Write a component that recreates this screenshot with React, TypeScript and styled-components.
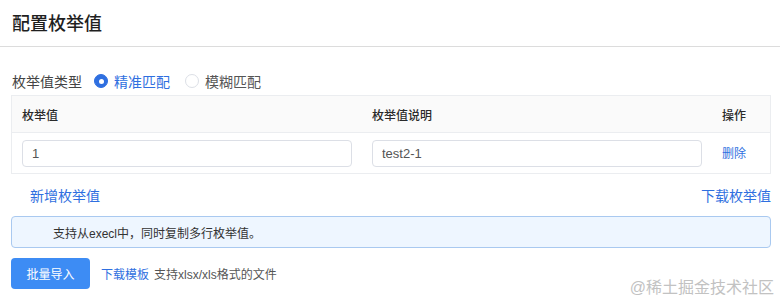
import React from "react";
import styled, { createGlobalStyle } from "styled-components";

const Global = createGlobalStyle`
  html, body { margin: 0; padding: 0; background: #fff; }
  body {
    font-family: "Liberation Sans", "Noto Sans CJK SC", sans-serif;
    color: #333;
    -webkit-font-smoothing: antialiased;
  }
  * { box-sizing: border-box; }
`;

const Page = styled.div`
  position: relative;
  width: 780px;
  height: 303px;
  overflow: hidden;
`;

const Header = styled.div`
  height: 47px;
  padding: 0 12px;
  display: flex;
  align-items: center;
  border-bottom: 1px solid #dcdcdc;
`;

const Title = styled.h1`
  margin: 0;
  font-size: 18px;
  font-weight: 500;
  color: #1f1f1f;
  padding-bottom: 2px;
`;

const Content = styled.div`
  padding: 0 9px 0 11px;
`;

const TypeRow = styled.div`
  margin-top: 20px;
  height: 28px;
  display: flex;
  align-items: center;
  font-size: 14px;
`;

const TypeLabel = styled.span`
  color: #444;
  margin-left: 1px;
  margin-right: 12px;
`;

const RadioItem = styled.label<{ $checked?: boolean }>`
  display: inline-flex;
  align-items: center;
  gap: 6px;
  margin-right: 15px;
  color: ${(p) => (p.$checked ? "#2f6fe0" : "#555")};
  cursor: pointer;
`;

const RadioDot = styled.span<{ $checked?: boolean }>`
  width: 14px;
  height: 14px;
  border-radius: 50%;
  border: 1px solid ${(p) => (p.$checked ? "#2f6fe0" : "#dcdfe6")};
  background: ${(p) => (p.$checked ? "#2f6fe0" : "#fff")};
  display: inline-flex;
  align-items: center;
  justify-content: center;
  &::after {
    content: "";
    width: 5px;
    height: 5px;
    border-radius: 50%;
    background: #fff;
    display: ${(p) => (p.$checked ? "block" : "none")};
  }
`;

const Table = styled.div`
  border: 1px solid #ebedf0;
`;

const Row = styled.div<{ $head?: boolean }>`
  display: grid;
  grid-template-columns: 350px 350px 1fr;
  align-items: center;
  height: ${(p) => (p.$head ? "37px" : "40px")};
  background: ${(p) => (p.$head ? "#fafafa" : "#fff")};
  border-bottom: ${(p) => (p.$head ? "1px solid #ebedf0" : "none")};
`;

const HeadCell = styled.div`
  padding: 0 10px;
  font-size: 12px;
  font-weight: 500;
  color: #2a2a2a;
`;

const Cell = styled.div`
  padding: 0 10px;
`;

const Input = styled.input`
  width: 330px;
  height: 27px;
  border: 1px solid #dcdfe6;
  border-radius: 4px;
  padding: 0 9px;
  font-family: "Liberation Sans", "Noto Sans CJK SC", sans-serif;
  font-size: 13px;
  color: #555;
  outline: none;
`;

const Link = styled.a<{ $size?: number }>`
  color: #2f6fe0;
  font-size: ${(p) => p.$size ?? 12}px;
  text-decoration: none;
  cursor: pointer;
`;

const LinksRow = styled.div`
  height: 42px;
  display: flex;
  align-items: center;
  justify-content: space-between;
  padding-left: 19px;
  padding-bottom: 1px;
`;

const Alert = styled.div`
  height: 32px;
  border: 1px solid #a9c9f0;
  background: #eef6ff;
  border-radius: 4px;
  display: flex;
  align-items: center;
  padding-left: 41px;
  font-size: 12px;
  color: #333;
`;

const ImportRow = styled.div`
  margin-top: 10px;
  display: flex;
  align-items: center;
  font-size: 12px;
`;

const PrimaryButton = styled.button`
  width: 79px;
  height: 31px;
  border: none;
  border-radius: 4px;
  background: #3d8cf4;
  color: #fff;
  font-family: "Liberation Sans", "Noto Sans CJK SC", sans-serif;
  font-size: 12px;
  margin-right: 11px;
  cursor: pointer;
`;

const Hint = styled.span`
  color: #555;
  margin-left: 5px;
`;

const Watermark = styled.div`
  position: absolute;
  right: 6px;
  bottom: 5px;
  font-size: 16px;
  color: #c2c2c2;
  pointer-events: none;
`;

export default function App() {
  return (
    <Page>
      <Global />
      <Header>
        <Title>配置枚举值</Title>
      </Header>
      <Content>
        <TypeRow>
          <TypeLabel>枚举值类型</TypeLabel>
          <RadioItem $checked>
            <RadioDot $checked />
            精准匹配
          </RadioItem>
          <RadioItem>
            <RadioDot />
            模糊匹配
          </RadioItem>
        </TypeRow>
        <Table>
          <Row $head>
            <HeadCell>枚举值</HeadCell>
            <HeadCell>枚举值说明</HeadCell>
            <HeadCell>操作</HeadCell>
          </Row>
          <Row>
            <Cell>
              <Input defaultValue="1" />
            </Cell>
            <Cell>
              <Input defaultValue="test2-1" />
            </Cell>
            <Cell>
              <Link>删除</Link>
            </Cell>
          </Row>
        </Table>
        <LinksRow>
          <Link $size={14}>新增枚举值</Link>
          <Link $size={14}>下载枚举值</Link>
        </LinksRow>
        <Alert>支持从execl中，同时复制多行枚举值。</Alert>
        <ImportRow>
          <PrimaryButton>批量导入</PrimaryButton>
          <Link>下载模板</Link>
          <Hint>支持xlsx/xls格式的文件</Hint>
        </ImportRow>
      </Content>
      <Watermark>@稀土掘金技术社区</Watermark>
    </Page>
  );
}
